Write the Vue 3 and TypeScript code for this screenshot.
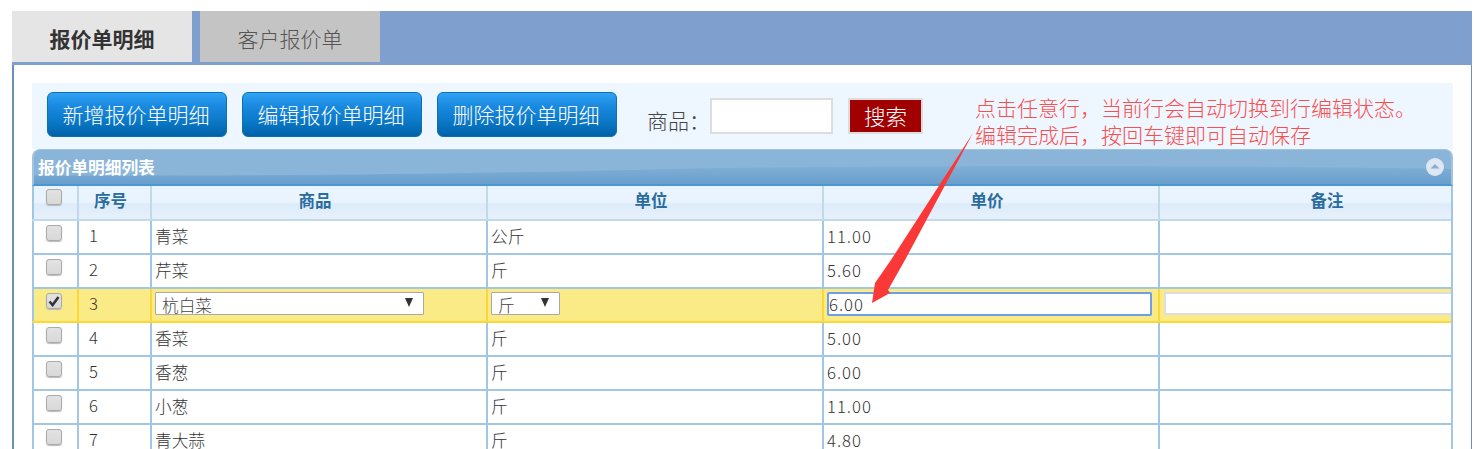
<script setup lang="ts">
interface Row {
  id: number
  name: string
  unit: string
  price: string
}
const rows: Row[] = [
  { id: 1, name: '青菜', unit: '公斤', price: '11.00' },
  { id: 2, name: '芹菜', unit: '斤', price: '5.60' },
  { id: 3, name: '杭白菜', unit: '斤', price: '6.00' },
  { id: 4, name: '香菜', unit: '斤', price: '5.00' },
  { id: 5, name: '香葱', unit: '斤', price: '6.00' },
  { id: 6, name: '小葱', unit: '斤', price: '11.00' },
  { id: 7, name: '青大蒜', unit: '斤', price: '4.80' },
]
const actions = ['新增报价单明细', '编辑报价单明细', '删除报价单明细']
</script>

<template>
  <div class="page">
    <div class="tabs">
      <div class="tab active">报价单明细</div>
      <div class="tab">客户报价单</div>
    </div>
    <div class="body">
      <div class="toolbar">
        <button v-for="a in actions" :key="a" class="action" type="button">{{ a }}</button>
        <label class="search-label">商品：</label>
        <input class="search-input" type="text" />
        <button class="search-btn" type="button">搜索</button>
        <div class="note">
          点击任意行，当前行会自动切换到行编辑状态。<br />编辑完成后，按回车键即可自动保存
        </div>
      </div>
      <div class="grid">
        <div class="grid-title">
          <svg class="wave" viewBox="0 0 1421 36" preserveAspectRatio="none" aria-hidden="true">
            <defs>
              <linearGradient id="waveFill" x1="0" y1="0" x2="0" y2="1">
                <stop offset="0" stop-color="#7fafd6" />
                <stop offset="1" stop-color="#6a9fcc" />
              </linearGradient>
            </defs>
            <path d="M0 27 C300 28 480 24 640 20 C850 16 1200 16 1421 20 L1421 36 L0 36 Z" fill="url(#waveFill)" />
          </svg>
          <span class="title-text">报价单明细列表</span>
          <svg class="collapse" viewBox="0 0 18 18" aria-hidden="true">
            <circle cx="9" cy="9" r="9" fill="#dfe7f3" />
            <path d="M4.5 10.5 L9 6 L13.5 10.5 Z" fill="#86aed0" />
          </svg>
        </div>
        <div class="table-wrap">
          <table class="table">
            <colgroup>
              <col class="c-check" />
              <col class="c-no" />
              <col class="c-wide" />
              <col class="c-wide" />
              <col class="c-wide" />
              <col class="c-wide" />
            </colgroup>
            <thead>
              <tr>
                <th class="cell-check"><span class="check head-check"></span></th>
                <th>序号</th>
                <th>商品</th>
                <th>单位</th>
                <th>单价</th>
                <th class="th-last">备注</th>
              </tr>
            </thead>
            <tbody>
              <tr v-for="r in rows" :key="r.id" :class="{ editing: r.id === 3 }">
                <td class="cell-check">
                  <span class="check">
                    <svg v-if="r.id === 3" viewBox="0 0 12 12" aria-hidden="true">
                      <path d="M1.5 6.5 L4.6 10 L10.5 2" fill="none" stroke="#333" stroke-width="2.6" />
                    </svg>
                  </span>
                </td>
                <td class="cell-no">{{ r.id }}</td>
                <template v-if="r.id === 3">
                  <td class="cell-edit">
                    <div class="select select-name"><span>{{ r.name }}</span><i class="caret"></i></div>
                  </td>
                  <td class="cell-edit">
                    <div class="select select-unit"><span>{{ r.unit }}</span><i class="caret"></i></div>
                  </td>
                  <td class="cell-edit"><input class="edit-price" type="text" :value="r.price" /></td>
                  <td class="cell-edit"><input class="edit-note" type="text" /></td>
                </template>
                <template v-else>
                  <td>{{ r.name }}</td>
                  <td>{{ r.unit }}</td>
                  <td class="num">{{ r.price }}</td>
                  <td></td>
                </template>
              </tr>
            </tbody>
          </table>
        </div>
      </div>
    </div>
    <svg class="arrow" viewBox="0 0 120 180" aria-hidden="true">
      <path d="M111 1 L43 128 L26 158 L28 161 L10 171 L13 151 L29 128 Z" fill="#fb3838" />
    </svg>
  </div>
</template>

<style>
html,
body {
  margin: 0;
  overflow: hidden;
  background: #fff;
}
</style>

<style scoped>
.page {
  position: relative;
  box-sizing: border-box;
  width: 1483px;
  height: 449px;
  overflow: hidden;
  padding: 11px 11px 0 12px;
  font-family: "Noto Sans CJK SC", "Noto Sans", sans-serif;
  color: #333;
}
.tabs {
  display: flex;
  gap: 8px;
  height: 54px;
  background: #7f9fce;
}
.tab {
  width: 180px;
  height: 51px;
  padding-top: 2px;
  box-sizing: border-box;
  background: #c4c4c4;
  color: #555;
  font-size: 21px;
  font-weight: 300;
  line-height: 50px;
  text-align: center;
}
.tab.active {
  background: #e5e5e5;
  color: #333;
  font-weight: 700;
}
.body {
  height: 384px;
  padding: 18px 18px 0;
  border-left: 2px solid #6a8fc0;
  border-right: 1px solid #6a8fc0;
}
.toolbar {
  position: relative;
  display: flex;
  align-items: flex-start;
  height: 66px;
  box-sizing: border-box;
  padding: 9px 0 0 15px;
  background: #eef6ff;
}
.action {
  box-sizing: border-box;
  width: 180px;
  height: 45px;
  margin-right: 15px;
  padding: 0 2px 2px 0;
  border: 1px solid #0f6fb0;
  border-radius: 6px;
  background: linear-gradient(#2fa3f5 0%, #1a8ae0 30%, #0b79c8 65%, #0062a8 100%);
  color: #fff;
  font: 300 21px/38px "Noto Sans CJK SC", sans-serif;
}
.search-label {
  margin: 13px 0 0 15px;
  width: 63px;
  font-size: 21px;
  font-weight: 300;
  line-height: 30px;
  color: #444;
}
.search-input {
  box-sizing: border-box;
  width: 123px;
  height: 36px;
  margin-top: 6px;
  border: 2px solid #ddd;
  background: #fff;
  outline: none;
}
.search-btn {
  box-sizing: border-box;
  width: 75px;
  height: 36px;
  margin: 6px 0 0 15px;
  padding: 0;
  border: 2px solid #ddd;
  background: #a00000;
  color: #fff;
  font: 300 21.5px/30px "Noto Sans CJK SC", sans-serif;
}
.note {
  position: absolute;
  left: 943px;
  top: 11px;
  color: #f94f4f;
  font-size: 21px;
  font-weight: 300;
  line-height: 27px;
  white-space: nowrap;
}
.grid-title {
  position: relative;
  height: 37px;
  box-sizing: border-box;
  border: 2px solid #a0c4e0;
  border-bottom: 2px solid #4a97d8;
  border-top-width: 1px;
  border-radius: 8px 8px 0 0;
  background: #8ab5d9;
  overflow: hidden;
}
.wave {
  position: absolute;
  inset: 0;
  width: 100%;
  height: 100%;
}
.title-text {
  position: relative;
  display: block;
  padding-left: 4px;
  color: #fff;
  font-size: 16.7px;
  font-weight: 700;
  line-height: 34px;
}
.collapse {
  position: absolute;
  right: 7px;
  top: 8px;
  width: 18px;
  height: 18px;
}
.table-wrap {
  position: relative;
  overflow: hidden;
  height: 300px;
}
.table-wrap::after {
  content: "";
  position: absolute;
  top: 0;
  right: 0;
  bottom: 0;
  width: 2px;
  background: #a2c7e4;
}
.table {
  width: 1464px;
  table-layout: fixed;
  border-collapse: collapse;
  font-size: 16.7px;
  font-weight: 300;
  color: #333;
}
.c-check { width: 45px; }
.c-no { width: 73px; }
.c-wide { width: 336px; }
th {
  height: 34px;
  box-sizing: border-box;
  padding: 0 8px 6px 0;
  border: 2px solid #c2d9ec;
  border-top: none;
  background: linear-gradient(#e9f4fe 0%, #e9f4fe 48%, #ddebf9 55%, #e6f1fb 100%);
  color: #2b6c9f;
  font-size: 16.5px;
  font-weight: 700;
  vertical-align: middle;
}
th:first-child {
  border-left-color: #a0c6e4;
}
th.th-last {
  padding-right: 0;
}
td {
  height: 34px;
  box-sizing: border-box;
  padding: 0 3px 3px;
  border: 2px solid #a2c7e4;
  background: #fff;
  line-height: 24px;
  white-space: nowrap;
  overflow: hidden;
}
td.cell-edit {
  padding-bottom: 1px;
}
.num,
.cell-no,
.edit-price {
  letter-spacing: 1px;
}
td.cell-no {
  padding-left: 10px;
  padding-bottom: 4px;
}
th.cell-check,
td.cell-check {
  padding: 0;
  text-align: center;
}
.check {
  display: inline-block;
  box-sizing: border-box;
  width: 16px;
  height: 16px;
  margin: 0 0 10px -3px;
  padding: 1px;
  border: 1px solid #aaa;
  border-radius: 3px;
  background: linear-gradient(#e2e2e2, #d8d8d8);
  box-shadow: 0 1px 1px #bbb;
  vertical-align: middle;
}
.check svg {
  display: block;
  width: 12px;
  height: 12px;
}
.head-check {
  margin-bottom: 12px;
}
.editing td {
  background: #fbeb87;
  border-left-color: #ffd633;
  border-right-color: #ffd633;
  border-bottom-color: #ffd633;
}
.editing td:first-child {
  border-left-color: #a2c7e4;
}
.select {
  display: flex;
  align-items: center;
  justify-content: space-between;
  box-sizing: border-box;
  height: 23px;
  margin-top: -2px;
  padding: 2px 10px 0 6px;
  border: 1px solid #a9a9a9;
  border-radius: 1px;
  background: #fff;
  line-height: 20px;
  color: #444;
}
.select-name { width: 269px; }
.select-unit { width: 69px; }
.caret {
  width: 0;
  height: 0;
  margin-top: -4px;
  border-left: 4.5px solid transparent;
  border-right: 4.5px solid transparent;
  border-top: 9px solid #333;
}
.edit-price,
.edit-note {
  display: block;
  box-sizing: border-box;
  height: 24px;
  margin: -2px 0 0;
  outline: none;
  font: 300 16.7px/20px "Noto Sans CJK SC", sans-serif;
  color: #333;
  background: #fff;
}
.edit-price {
  width: 325px;
  padding: 0;
  border: 2px solid #6f9fe4;
  border-radius: 2px;
}
.edit-note {
  width: 320px;
  height: 23px;
  margin-left: 1px;
  padding: 0;
  border: 2px solid #ddd;
}
.arrow {
  position: absolute;
  left: 862px;
  top: 132px;
  width: 120px;
  height: 180px;
  pointer-events: none;
}
</style>
